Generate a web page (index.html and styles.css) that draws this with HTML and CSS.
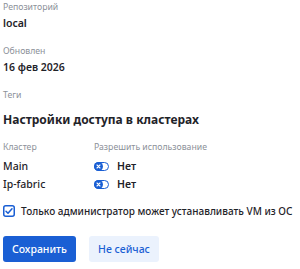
FILE: index.html
```html
<!DOCTYPE html>
<html lang="ru">
<head>
    <meta charset="UTF-8">
    <title>Репозиторий</title>
    <link rel="stylesheet" href="styles.css">
</head>
<body>
    <div class="panel">
        <div class="field">
            <div class="field-label">Репозиторий</div>
            <div class="field-value">local</div>
        </div>
        <div class="field">
            <div class="field-label">Обновлен</div>
            <div class="field-value">16 фев 2026</div>
        </div>
        <div class="field field-tags">
            <div class="field-label">Теги</div>
        </div>

        <div class="section-title">Настройки доступа в кластерах</div>

        <div class="access-table">
            <div class="col-head">Кластер</div>
            <div class="col-head">Разрешить использование</div>

            <div class="cluster-name">Main</div>
            <div class="toggle-cell">
                <svg class="toggle" width="15" height="9" viewBox="0 0 15 9">
                    <rect x="0.5" y="0.5" width="14" height="8" rx="4" fill="#fff" stroke="#1a5fd4"/>
                    <circle cx="4.5" cy="4.5" r="4.5" fill="#1a5fd4"/>
                    <path d="M3 3l3 3M6 3l-3 3" stroke="#fff" stroke-width="1.1" stroke-linecap="round"/>
                </svg>
                <span>Нет</span>
            </div>

            <div class="cluster-name">Ip-fabric</div>
            <div class="toggle-cell">
                <svg class="toggle" width="15" height="9" viewBox="0 0 15 9">
                    <rect x="0.5" y="0.5" width="14" height="8" rx="4" fill="#fff" stroke="#1a5fd4"/>
                    <circle cx="4.5" cy="4.5" r="4.5" fill="#1a5fd4"/>
                    <path d="M3 3l3 3M6 3l-3 3" stroke="#fff" stroke-width="1.1" stroke-linecap="round"/>
                </svg>
                <span>Нет</span>
            </div>
        </div>

        <label class="check-row">
            <svg class="check" width="12" height="12" viewBox="0 0 12 12">
                <rect x="0.75" y="0.75" width="10.5" height="10.5" rx="2" fill="#fff" stroke="#1a5fd4" stroke-width="1.5"/>
                <path d="M3 6.2l2 2.1 4-4.6" fill="none" stroke="#1a5fd4" stroke-width="1.5" stroke-linecap="round" stroke-linejoin="round"/>
            </svg>
            <span>Только администратор может устанавливать VM из ОС</span>
        </label>

        <div class="actions">
            <button class="btn btn-primary">Сохранить</button>
            <button class="btn btn-secondary">Не сейчас</button>
        </div>
    </div>
</body>
</html>
```

FILE: styles.css
```css
* {
    margin: 0;
    padding: 0;
    box-sizing: border-box;
}

body {
    background: #fff;
    color: #1f2329;
    font-family: 'Noto Sans', sans-serif;
    padding: 1px 3px;
}

.panel {
    display: flex;
    flex-direction: column;
}

.field {
    margin-bottom: 14px;
}

.field-tags {
    margin-bottom: 11px;
}

.field-label {
    font-size: 8.7px;
    line-height: 12px;
    color: #8c9199;
}

.field-value {
    font-size: 10.5px;
    font-weight: 600;
    line-height: 16px;
    margin-top: 2px;
}

.section-title {
    font-size: 12px;
    font-weight: 700;
    line-height: 16px;
    margin-bottom: 13px;
}

.access-table {
    display: grid;
    grid-template-columns: 91px 1fr;
    row-gap: 3px;
    align-items: center;
}

.col-head {
    font-size: 8.7px;
    line-height: 12px;
    color: #8c9199;
    margin-bottom: 3px;
}

.cluster-name {
    font-size: 10.5px;
    font-weight: 500;
    line-height: 15px;
}

.toggle-cell {
    display: flex;
    align-items: center;
    gap: 8px;
    font-size: 10.5px;
    font-weight: 600;
    line-height: 15px;
}

.check-row {
    display: flex;
    align-items: center;
    gap: 6px;
    margin-top: 12px;
    font-size: 10px;
    font-weight: 500;
    line-height: 14px;
}

.actions {
    display: flex;
    gap: 13px;
    margin-top: 18px;
}

.btn {
    font-family: 'Noto Sans', sans-serif;
    font-size: 10.5px;
    font-weight: 500;
    height: 26px;
    border: none;
    border-radius: 3px;
    white-space: nowrap;
}

.btn-primary {
    background: #1a5fd4;
    color: #fff;
    width: 73px;
}

.btn-secondary {
    background: #ebf2fd;
    color: #1a5fd4;
    width: 70px;
}
```
